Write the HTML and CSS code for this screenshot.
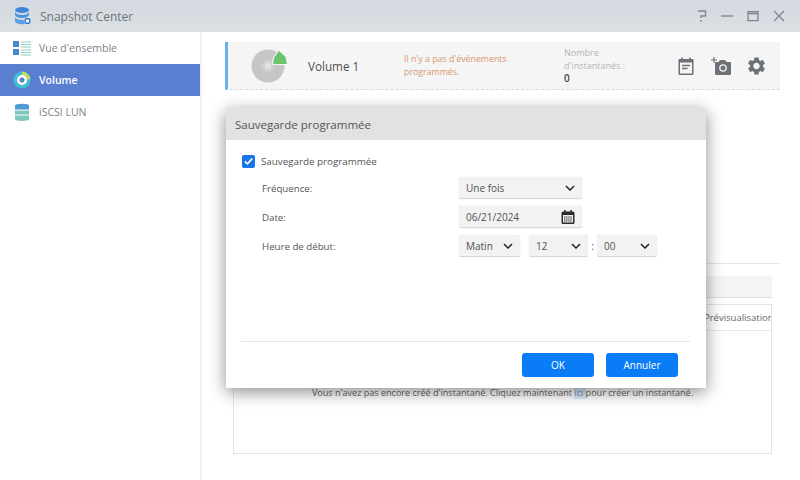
FILE: index.html
```html
<!DOCTYPE html>
<html lang="fr">
<head>
<meta charset="utf-8">
<title>Snapshot Center</title>
<link rel="stylesheet" href="styles.css">
</head>
<body>
<div class="app">
  <header class="titlebar">
    <svg class="app-icon" viewBox="0 0 20 20" width="20" height="20">
      <ellipse cx="9" cy="4" rx="7" ry="3" fill="#3f86d8"/>
      <path d="M2 6c1 2 3 3 7 3s6-1 7-3v3c-1 2-3 3-7 3s-6-1-7-3z" fill="#4b93e0"/>
      <path d="M2 11c1 2 3 3 7 3 1 0 2 0 3-.3V18c-1 .2-2 .2-3 .2-4 0-6-1-7-3z" fill="#5aa0e6"/>
      <circle cx="14.500" cy="15" r="3.500" fill="#fff"/>
      <circle cx="14.500" cy="15" r="2.500" fill="none" stroke="#2f76c8" stroke-width="1.400"/>
    </svg>
    <span class="app-title">Snapshot Center</span>
    <div class="win-controls">
      <svg viewBox="0 0 12 14" width="12" height="14"><path d="M2 2h7.500v5H5v2M5 11v2" fill="none" stroke="#7b868d" stroke-width="1.300"/></svg>
      <svg viewBox="0 0 14 14" width="14" height="14"><path d="M1 7h12" stroke="#7b868d" stroke-width="1.300"/></svg>
      <svg viewBox="0 0 14 14" width="14" height="14"><path d="M2 2.700h10v9H2zM2 4.500h10" fill="none" stroke="#7b868d" stroke-width="1.300"/></svg>
      <svg viewBox="0 0 14 14" width="14" height="14"><path d="M2 2l10 10M12 2L2 12" stroke="#7b868d" stroke-width="1.300"/></svg>
    </div>
  </header>
  <div class="body">
    <nav class="sidebar">
      <div class="nav-item">
        <svg viewBox="0 0 20 18" width="20" height="18" class="nav-icon">
          <rect x="1" y="2" width="6" height="6" fill="#4a86d0"/><rect x="1" y="10" width="6" height="6" fill="#4a86d0"/>
          <path d="M9 3h10M9 5.500h10M9 8h10M9 11h10M9 13.500h10M9 16h10" stroke="#8cc9c0" stroke-width="1.200"/>
        </svg>
        <span>Vue d'ensemble</span>
      </div>
      <div class="nav-item active">
        <svg viewBox="0 0 20 20" width="20" height="20" class="nav-icon">
          <circle cx="10" cy="10" r="8.500" fill="#3fbfd0"/>
          <path d="M10 1.500A8.500 8.500 0 0 1 18.500 9L14 9.500A4.500 4.500 0 0 0 10 5.500z" fill="#c5dc63"/>
          <circle cx="10" cy="10" r="5" fill="#fff"/>
          <circle cx="10" cy="10" r="2.500" fill="#5a7fd0"/>
        </svg>
        <span>Volume</span>
      </div>
      <div class="nav-item">
        <svg viewBox="0 0 20 20" width="20" height="20" class="nav-icon">
          <path d="M3 3.500h14v4H3z" fill="#4f9ad6"/>
          <path d="M3 8.500h14v4H3z" fill="#7fc6bd"/>
          <path d="M3 13.500h14v4H3z" fill="#7fc6bd"/>
          <ellipse cx="10" cy="3.500" rx="7" ry="1.800" fill="#4f9ad6"/>
          <ellipse cx="10" cy="17.500" rx="7" ry="1.500" fill="#7fc6bd"/>
        </svg>
        <span>iSCSI LUN</span>
      </div>
    </nav>
    <main class="main">
      <section class="volume-card">
        <svg class="disc" viewBox="0 0 38 36" width="38" height="36">
          <circle cx="18" cy="18" r="16.500" fill="#c6c6c6"/>
          <circle cx="18" cy="18" r="6" fill="#d2d2d2"/>
          <circle cx="18" cy="18" r="3" fill="#e4e4e4"/>
          <path d="M29 2l7 6.500 1.500 8H22.500l1-7z" fill="#6cc46c" stroke="#f5f5f5" stroke-width="1.200" stroke-linejoin="round"/>
        </svg>
        <div class="volume-name">Volume 1</div>
        <div class="volume-events">Il n'y a pas d'événements programmés.</div>
        <div class="volume-count">
          <div class="count-label">Nombre d'instantanés.:</div>
          <div class="count-value">0</div>
        </div>
        <div class="card-actions">
          <svg viewBox="0 0 16 18" width="16" height="18"><path d="M1.500 2h13a1 1 0 0 1 1 1v14a1 1 0 0 1-1 1h-13a1 1 0 0 1-1-1V3a1 1 0 0 1 1-1z" fill="#6c7278"/><rect x="2" y="5.500" width="12" height="11" fill="#f5f5f5"/><path d="M4 .5v3M12 .5v3" stroke="#6c7278" stroke-width="1.600"/><path d="M4 8.500h8M4 11.500h5.500" stroke="#6c7278" stroke-width="1.500"/></svg>
          <svg viewBox="0 0 20 18" width="20" height="18"><path d="M5 5h2.500L9 3h5l1.500 2H19a1 1 0 0 1 1 1v11a1 1 0 0 1-1 1H5a1 1 0 0 1-1-1V6a1 1 0 0 1 1-1z" fill="#6c7278"/><circle cx="12" cy="11" r="3.800" fill="#f5f5f5"/><circle cx="12" cy="11" r="2.500" fill="#6c7278"/><path d="M0 3h6M3 0v6" stroke="#6c7278" stroke-width="1.200"/></svg>
          <svg viewBox="2.500 2 19 20" width="17" height="18"><path d="M19.140 12.940c.04-.3.06-.61.06-.94 0-.32-.02-.64-.07-.94l2.030-1.580c.18-.14.23-.41.12-.61l-1.920-3.320c-.12-.22-.37-.29-.59-.22l-2.390.96c-.5-.38-1.030-.7-1.620-.94l-.36-2.540c-.04-.24-.24-.41-.48-.41h-3.840c-.24 0-.43.17-.47.41l-.36 2.540c-.59.24-1.130.57-1.620.94l-2.390-.96c-.22-.08-.47 0-.59.22L2.740 8.870c-.12.21-.08.47.12.61l2.030 1.580c-.05.3-.09.63-.09.94s.02.64.07.94l-2.030 1.580c-.18.14-.23.41-.12.61l1.920 3.320c.12.22.37.29.59.22l2.390-.96c.5.38 1.030.7 1.620.94l.36 2.540c.05.24.24.41.48.41h3.840c.24 0 .44-.17.47-.41l.36-2.540c.59-.24 1.130-.56 1.620-.94l2.390.96c.22.08.47 0 .59-.22l1.920-3.320c.12-.22.07-.47-.12-.61l-2.010-1.580zM12 15.600c-1.980 0-3.600-1.620-3.600-3.600s1.620-3.600 3.600-3.600 3.600 1.620 3.600 3.600-1.620 3.600-3.600 3.600z" fill="#6c7278"/></svg>
        </div>
      </section>
      <div class="spacer"></div>
      <div class="divider"></div>
      <div class="search-box"></div>
      <section class="table">
        <div class="table-head"><span class="preview-col">Prévisualisation</span></div>
        <div class="table-body">
          <p class="empty-msg">Vous n'avez pas encore créé d'instantané. Cliquez maintenant <a class="link">ici </a>pour créer un instantané.</p>
        </div>
      </section>
    </main>
  </div>
  <div class="dialog">
    <div class="dialog-title">Sauvegarde programmée</div>
    <div class="dialog-body">
      <label class="check-row">
        <span class="checkbox"><svg viewBox="0 0 14 14" width="14" height="14"><path d="M3 7.300l2.800 2.700L11 4.500" fill="none" stroke="#fff" stroke-width="1.800"/></svg></span>
        <span>Sauvegarde programmée</span>
      </label>
      <div class="form">
        <div class="form-label">Fréquence:</div>
        <div class="field wide"><span>Une fois</span><svg class="chev" viewBox="0 0 10 6" width="10" height="6"><path d="M1 1l4 4 4-4" fill="none" stroke="#222" stroke-width="1.500"/></svg></div>
        <div class="form-label">Date:</div>
        <div class="field wide"><span>06/21/2024</span>
          <svg viewBox="0 0 14 14" width="14" height="14"><path d="M2 1.500h10a1.500 1.500 0 0 1 1.500 1.500v9.500A1.500 1.500 0 0 1 12 14H2a1.500 1.500 0 0 1-1.500-1.500V3A1.500 1.500 0 0 1 2 1.500z" fill="#2b2b2b"/><rect x="2" y="5" width="10" height="7.500" fill="#eee"/><path d="M4 0v3M10 0v3" stroke="#2b2b2b" stroke-width="1.500"/><path d="M3 7h8M3 9h8M3 11h8" stroke="#2b2b2b" stroke-width="1.100" stroke-dasharray="1.400 .7"/></svg>
        </div>
        <div class="form-label">Heure de début:</div>
        <div class="time-row">
          <div class="field ampm"><span>Matin</span><svg class="chev" viewBox="0 0 10 6" width="10" height="6"><path d="M1 1l4 4 4-4" fill="none" stroke="#222" stroke-width="1.500"/></svg></div>
          <div class="field hour"><span>12</span><svg class="chev" viewBox="0 0 10 6" width="10" height="6"><path d="M1 1l4 4 4-4" fill="none" stroke="#222" stroke-width="1.500"/></svg></div>
          <span class="colon">:</span>
          <div class="field minute"><span>00</span><svg class="chev" viewBox="0 0 10 6" width="10" height="6"><path d="M1 1l4 4 4-4" fill="none" stroke="#222" stroke-width="1.500"/></svg></div>
        </div>
      </div>
    </div>
    <div class="dialog-foot">
      <button class="btn">OK</button>
      <button class="btn">Annuler</button>
    </div>
  </div>
</div>
</body>
</html>
```
FILE: styles.css
```css
* { box-sizing: border-box; }
html, body { margin: 0; padding: 0; }
body { width: 800px; height: 480px; overflow: hidden; background: #fff; font-family: "Open Sans", sans-serif; font-size: 10px; color: #555; }
.app { position: relative; width: 800px; height: 480px; display: flex; flex-direction: column; }
.titlebar { height: 32px; flex: none; display: flex; align-items: center; padding: 0 14px 0 13px; background: linear-gradient(#d3d9de, #d9dfe3); }
.app-icon { flex: none; }
.app-title { margin-left: 7px; font-size: 12px; color: #6c757b; }
.win-controls { margin-left: auto; display: flex; align-items: center; gap: 12px; }
.body { flex: 1; display: flex; min-height: 0; }
.sidebar { width: 202px; flex: none; border-right: 2px solid #f0f1f2; }
.nav-item { height: 32px; display: flex; align-items: center; padding-left: 12px; color: #7a7f84; font-size: 10.500px; }
.nav-item span { margin-left: 7px; }
.nav-icon { flex: none; }
.nav-item.active { background: #5a7fd0; color: #fff; font-weight: 600; width: 200px; }
.main { flex: 1; display: flex; flex-direction: column; padding: 10px 28px 26px 23px; min-width: 0; }
.volume-card { height: 48px; flex: none; margin-right: -8px; display: flex; align-items: center; background: #f5f5f5; border-left: 3px solid #6cb0e8; border-bottom: 1px dashed #dcdcdc; padding-left: 22px; }
.disc { flex: none; }
.volume-name { margin-left: 20px; width: 96px; font-size: 11.700px; color: #4f4f4f; font-weight: 500; }
.volume-events { width: 120px; font-size: 8.800px; line-height: 12.500px; color: #d9986f; }
.volume-count { margin-left: 40px; width: 80px; font-size: 9px; line-height: 13px; color: #b5b5b5; }
.count-value { color: #444; font-weight: 600; font-size: 10px; }
.card-actions { margin-left: 34px; display: flex; align-items: center; gap: 17px; }
.spacer { flex: 1; }
.divider { height: 1px; background: #e6e6e6; margin: 0 -8px 12px 0; }
.search-box { height: 22px; flex: none; background: #f4f4f4; border-bottom: 1px solid #dcdcdc; margin-left: 8px; }
.table { flex: none; height: 150px; margin: 6px 0 0 8px; border: 1px solid #e3e3e3; display: flex; flex-direction: column; }
.table-head { height: 26px; flex: none; display: flex; align-items: center; padding-left: 470px; border-bottom: 1px solid #e8e8e8; overflow: hidden; }
.preview-col { font-size: 9.500px; color: #666; white-space: nowrap; }
.table-body { flex: 1; padding-top: 55px; }
.empty-msg { margin: 0; text-align: center; font-size: 9.050px; color: #666; }
.link { color: #6a9bd0; background: #dde8f4; white-space: pre; }
.dialog { position: absolute; left: 226px; top: 108px; width: 480px; height: 280px; background: #fff; box-shadow: 0 4px 16px rgba(0, 0, 0, .45); display: flex; flex-direction: column; }
.dialog-title { height: 32px; flex: none; display: flex; align-items: center; padding-left: 9px; background: #e2e2e2; font-size: 11.500px; color: #555; }
.dialog-body { flex: 1; padding: 14px 28px 0 16px; }
.check-row { display: flex; align-items: center; gap: 6px; font-size: 9.800px; color: #555; height: 14px; }
.checkbox { width: 13px; height: 13px; flex: none; background: #1a73e8; border-radius: 2px; display: flex; align-items: center; justify-content: center; }
.form { display: grid; grid-template-columns: 197px auto; justify-content: start; align-items: center; row-gap: 7px; margin-top: 9px; padding-left: 20px; }
.form-label { font-size: 9.700px; color: #555; }
.field { height: 22px; background: #f2f2f2; border-radius: 2px; border-bottom: 1px solid #d8d8d8; box-shadow: 0 0 1px rgba(0, 0, 0, .2); display: flex; align-items: center; justify-content: space-between; padding: 0 7px; font-size: 10px; color: #505050; }
.wide { width: 123px; }
.time-row { display: flex; align-items: center; }
.ampm { width: 61px; }
.hour { width: 59px; margin-left: 9px; }
.colon { width: 9px; text-align: center; }
.minute { width: 60px; }
.dialog-foot { height: 47px; flex: none; margin: 0 16px 0 15px; border-top: 1px solid #e6e6e6; display: flex; justify-content: flex-end; gap: 12px; padding: 11px 12px 0 0; }
.btn { width: 72px; height: 24px; border: 0; border-radius: 3px; background: #0a7cf5; color: #fff; font-family: inherit; font-size: 10px; font-weight: 500; }
```
